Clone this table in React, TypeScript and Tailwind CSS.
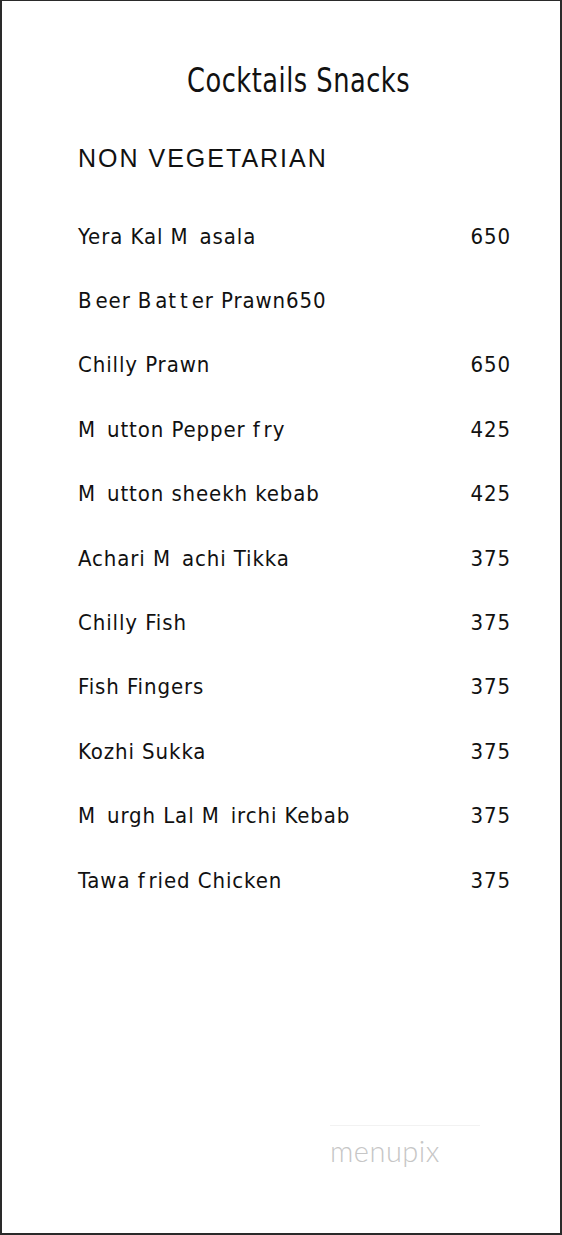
// "|" marks a wide gap and "^" a narrow one, as the printed menu shows inside words
const items: { name: string; price: string }[] = [
  { name: "Yera Kal M|asala", price: "650" },
  { name: "B^eer B^at^t^er Prawn650", price: "" },
  { name: "Chilly Prawn", price: "650" },
  { name: "M|utton Pepper f^ry", price: "425" },
  { name: "M|utton sheekh kebab", price: "425" },
  { name: "Achari M|achi Tikka", price: "375" },
  { name: "Chilly Fish", price: "375" },
  { name: "Fish Fingers", price: "375" },
  { name: "Kozhi Sukka", price: "375" },
  { name: "M|urgh Lal M|irchi Kebab", price: "375" },
  { name: "Tawa f^ried Chicken", price: "375" },
];

function Name({ text }: { text: string }) {
  const parts = text.split(/(?=[|^])/);
  return (
    <span>
      {parts.map((p, i) => {
        if (p.startsWith("|")) return <span key={i} className="ml-[11px]">{p.slice(1)}</span>;
        if (p.startsWith("^")) return <span key={i} className="ml-[3px]">{p.slice(1)}</span>;
        return <span key={i}>{p}</span>;
      })}
    </span>
  );
}

export default function App() {
  return (
    <div className="relative w-[562px] h-[1235px] bg-white border-t border-l-2 border-r-2 border-b-2 border-[#2a2a2a] text-[#111] font-['DejaVu_Sans_Condensed','DejaVu_Sans',sans-serif] font-stretch-condensed">
      <h1 className="pt-[57px] pl-[185px]">
        <span className="inline-block origin-left scale-x-[0.84] text-[34px] leading-[44px] tracking-[0.6px] whitespace-nowrap">Cocktails Snacks</span>
      </h1>

      <h2 className="mt-[40px] pl-[76px] text-[25px] leading-[32px] tracking-[2px] font-['Liberation_Sans',sans-serif] font-stretch-normal">
        NON VEGETARIAN
      </h2>

      {/* menu rows */}
      <ul className="mt-[30px] pl-[76px] pr-[49px]">
        {items.map((it) => (
          <li key={it.name} className="flex justify-between items-center h-[64.4px] text-[22px] tracking-[0.9px]">
            <Name text={it.name} />
            <span>{it.price}</span>
          </li>
        ))}
      </ul>

      <div className="absolute left-[328px] top-[1124px] w-[150px] border-t border-[#f2f2f2]" />
      <p className="absolute left-[328px] top-[1134px] text-[29px] leading-[32px] font-light tracking-[0.5px] text-[#c6c6c6] font-['Lato','Open_Sans',sans-serif]">
        menupix
      </p>
    </div>
  );
}
